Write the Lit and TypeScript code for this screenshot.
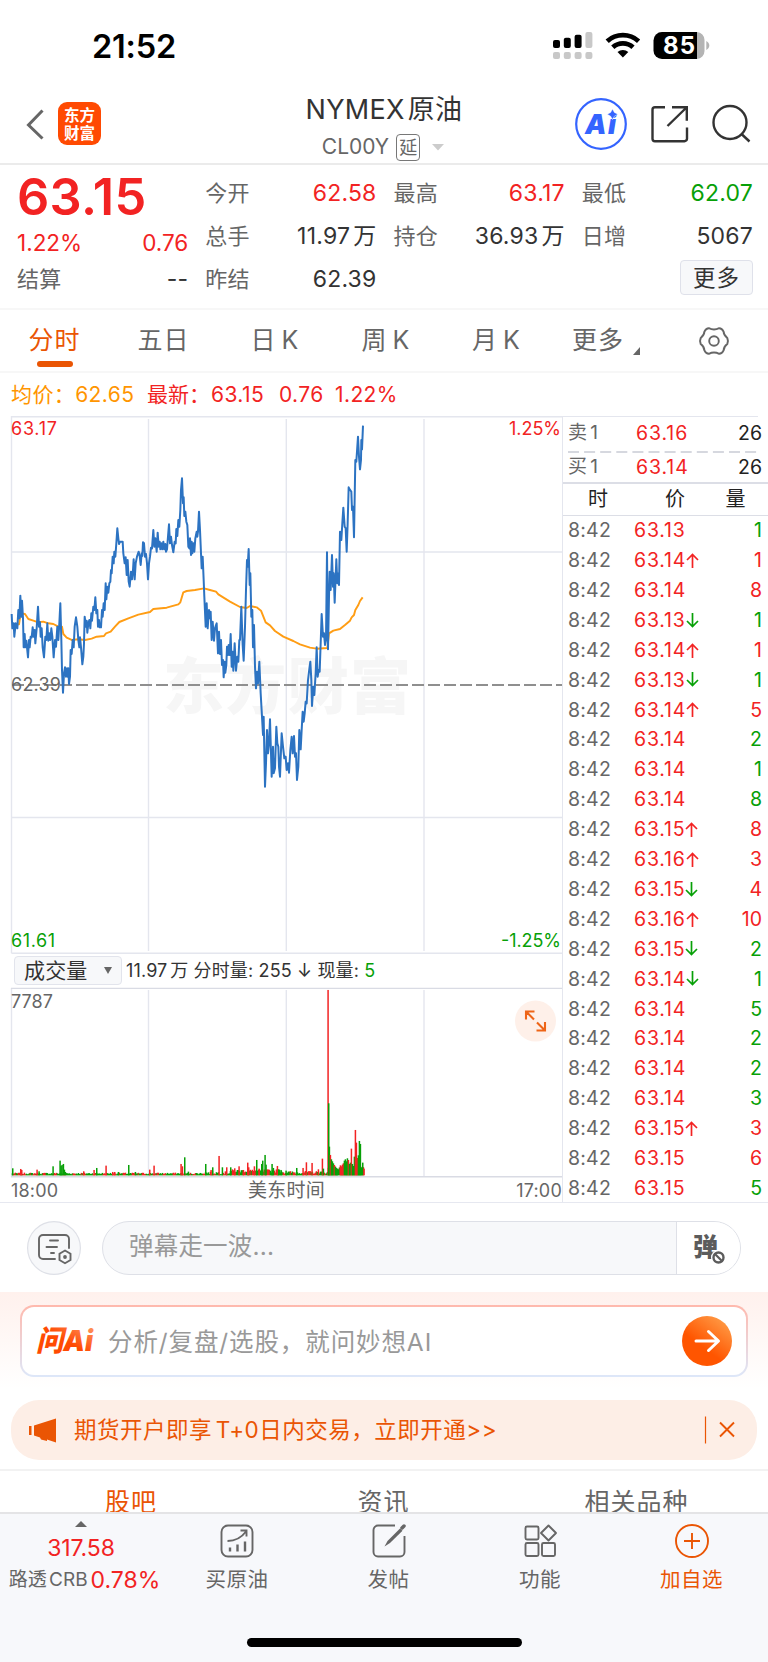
import { LitElement, html, svg, css } from "lit";
import { customElement } from "lit/decorators.js";

const RED = "#f22323";
const GREEN = "#07a007";

// Chart samples: x, y pairs in third-pixel units, y measured from 6px above the plot.
const PRICE = [
  35,612,37,655,41,640,43,680,47,640,52,655,55,600,58,625,61,557,64,620,66,572,69,625,71,712,74,672,76,712,79,692,
  81,712,84,742,87,690,89,712,92,680,95,682,98,652,101,680,104,660,106,700,110,655,114,590,117,650,120,637,122,680,
  125,655,128,712,132,742,136,680,139,690,142,640,145,692,148,670,151,690,154,655,157,680,161,742,165,690,168,710,
  172,650,175,690,178,640,181,580,184,690,186,780,189,848,192,790,195,772,198,800,201,775,203,800,205,775,207,822,
  210,800,212,720,215,732,218,690,221,712,224,650,228,622,232,650,235,690,238,712,240,682,243,712,247,763,250,740,
  252,700,254,620,258,650,260,632,262,668,265,640,268,630,271,655,274,610,276,632,280,590,283,600,286,562,289,610,
  292,600,294,650,297,630,299,652,303,652,306,600,308,620,311,580,314,600,317,520,319,568,322,530,325,548,328,520,
  331,515,333,480,335,490,338,440,341,460,343,425,346,440,349,400,352,355,355,385,357,402,360,395,368,395,370,430,
  374,460,377,442,380,495,383,450,386,515,389,530,393,485,396,508,399,480,401,448,404,508,407,460,411,440,416,425,
  419,437,422,465,425,430,427,438,429,397,432,400,435,440,438,432,441,460,444,508,447,460,450,440,453,413,456,415,
  460,360,463,410,466,385,470,425,473,368,476,410,479,395,481,418,484,400,487,418,490,395,493,418,496,402,498,425,
  501,418,504,380,507,343,510,400,513,380,516,405,520,427,524,395,527,400,529,357,532,378,535,330,538,350,541,300,
  543,240,546,205,549,280,551,262,553,318,556,305,559,335,562,345,565,410,568,415,570,385,573,435,575,395,577,430,
  580,400,583,425,586,385,590,365,592,380,594,365,597,305,600,360,603,430,605,475,608,440,611,510,613,560,617,650,
  620,580,623,655,627,600,630,625,632,605,635,690,638,635,642,692,645,655,648,645,650,640,654,730,657,665,660,732,
  663,690,666,765,669,750,671,802,674,755,676,788,679,765,681,710,684,735,686,705,689,735,692,672,695,770,698,725,
  700,782,704,700,708,782,712,740,715,755,718,690,720,690,724,590,728,705,731,752,735,650,738,540,741,450,743,470,
  746,417,749,525,751,490,754,620,757,600,759,712,762,645,765,770,768,835,771,785,774,820,778,755,782,850,786,920,
  789,975,791,920,795,1130,798,1060,801,960,804,1030,807,1000,810,928,813,1030,815,1100,819,1010,821,1090,825,1075,
  829,950,832,1000,835,1010,837,1070,840,1100,845,970,849,1010,853,1045,857,1040,860,1080,864,1060,867,1088,
  871,1020,875,980,878,1030,882,978,885,1040,888,1030,891,1110,895,1070,898,960,902,1018,905,960,908,905,911,935,
  914,910,917,875,920,880,924,810,927,785,931,755,934,810,936,888,940,830,943,855,947,790,950,712,953,800,956,780,
  959,785,962,700,965,612,969,680,972,670,975,705,978,690,981,427,984,718,987,560,989,485,992,540,996,435,999,530,
  1001,490,1004,578,1007,500,1009,448,1012,520,1015,490,1017,525,1020,365,1024,390,1027,340,1030,293,1034,350,
  1037,355,1040,425,1043,340,1046,232,1050,240,1054,245,1056,300,1059,290,1062,382,1066,150,1069,155,1074,80,
  1077,140,1080,178,1083,150,1084,90,1086,118,1089,47,
];
const AVERAGE = [
  40,645,57,643,62,610,75,612,85,627,100,632,115,637,130,635,145,640,160,642,175,650,186,650,190,672,200,683,
  215,690,235,688,255,690,275,686,290,680,312,678,318,670,332,665,345,650,358,636,385,625,415,614,450,606,460,597,
  500,593,535,583,541,577,550,547,560,543,585,540,612,535,630,540,648,545,655,553,690,575,720,591,740,594,750,588,
  770,592,783,602,797,637,810,646,825,663,850,680,880,693,900,703,930,713,950,716,982,714,987,670,1000,662,
  1020,657,1035,645,1050,632,1055,622,1062,615,1066,600,1075,585,1080,573,1088,562,
];

type Bar = [number, number, "r" | "g"];
const PEAKS: Bar[] = [
  [38,21,"g"],[62,19,"r"],[65,16,"r"],[111,17,"r"],[117,12,"g"],[159,27,"g"],[180,44,"g"],[183,28,"g"],[186,31,"g"],
  [190,34,"g"],[193,17,"g"],[196,10,"g"],[251,12,"r"],[282,16,"r"],[290,22,"g"],[318,29,"r"],[338,10,"r"],[344,10,"r"],
  [355,10,"g"],[386,31,"g"],[406,10,"g"],[449,17,"r"],[462,29,"r"],[543,34,"r"],[547,27,"r"],[554,54,"g"],[565,11,"g"],
  [617,34,"g"],[633,16,"r"],[638,24,"g"],[657,58,"r"],[667,24,"g"],[680,24,"r"],[692,24,"g"],[704,21,"r"],[717,27,"r"],
  [730,16,"r"],[743,38,"r"],[746,24,"r"],[763,27,"r"],[770,46,"g"],[777,20,"r"],[785,34,"g"],[788,44,"g"],[795,61,"g"],
  [798,32,"g"],[816,34,"g"],[820,22,"g"],[832,28,"r"],[836,18,"g"],[843,16,"g"],[858,14,"g"],[890,22,"g"],[909,22,"r"],
  [919,39,"r"],[936,37,"r"],[955,18,"r"],[967,50,"r"],[970,20,"g"],[984,556,"r"],[986,216,"g"],[988,86,"g"],[991,61,"r"],
  [994,48,"g"],[997,42,"g"],[1000,36,"g"],[1003,31,"r"],[1006,26,"g"],[1009,22,"g"],[1012,20,"g"],[1021,30,"r"],
  [1024,27,"r"],[1027,32,"r"],[1030,36,"r"],[1033,44,"g"],[1036,48,"g"],[1039,42,"g"],[1042,51,"g"],[1045,46,"r"],
  [1048,34,"g"],[1051,38,"g"],[1054,80,"r"],[1057,34,"g"],[1060,28,"g"],[1063,56,"g"],[1066,136,"r"],[1069,98,"r"],
  [1072,52,"r"],[1075,60,"g"],[1078,103,"g"],[1081,94,"g"],[1084,24,"g"],[1088,38,"g"],[1092,20,"r"],
];

function floorBars(): Bar[] {
  const out: Bar[] = [];
  let seed = 7;
  for (let x = 37; x < 1092; x += 3) {
    seed = (seed * 1103515245 + 12345) % 2147483648;
    const r = seed / 2147483648;
    let base = 3;
    let span = 5;
    if (x > 605 && x < 690) span = 9;
    if (x >= 690 && x < 850) { base = 8; span = 10; }
    if (x >= 850 && x < 984) { base = 4; span = 9; }
    if (x >= 984) { base = 14; span = 12; }
    out.push([x, base + r * span, (x * 7) % 10 < 3 || r > 0.85 ? "r" : "g"]);
  }
  return out;
}
const VOLUME: Bar[] = [...floorBars(), ...PEAKS];

const toPath = (p: number[]) => {
  let d = "";
  for (let i = 0; i < p.length; i += 2) d += `${i ? "L" : "M"}${p[i]} ${p[i + 1]}`;
  return d;
};

type Tick = [string, "" | "↑" | "↓", string, "r" | "g"];
const TICKS: Tick[] = [
  ["63.13","","1","g"],["63.14","↑","1","r"],["63.14","","8","r"],["63.13","↓","1","g"],["63.14","↑","1","r"],
  ["63.13","↓","1","g"],["63.14","↑","5","r"],["63.14","","2","g"],["63.14","","1","g"],["63.14","","8","g"],
  ["63.15","↑","8","r"],["63.16","↑","3","r"],["63.15","↓","4","r"],["63.16","↑","10","r"],["63.15","↓","2","g"],
  ["63.14","↓","1","g"],["63.14","","5","g"],["63.14","","2","g"],["63.14","","2","g"],["63.14","","3","g"],
  ["63.15","↑","3","r"],["63.15","","6","r"],["63.15","","5","g"],
];

const base = css`
  :host { display: block; box-sizing: border-box; }
  * { box-sizing: border-box; }
  svg { display: block; flex: none; overflow: visible; }
  .r { color: #f22323; }
  .g { color: #07a007; }
`;

@customElement("status-bar")
class StatusBar extends LitElement {
  static styles = [base, css`
    :host { height: 92px; }
    .bar { display: flex; height: 92px; padding-left: 92px; padding-right: 58px; justify-content: space-between; align-items: center; }
    .time { font-size: 32.5px; font-weight: 600; color: #000; letter-spacing: -0.2px; padding-top: 2px; }
    .lv { font: 700 24px Inter, sans-serif; fill: #fff; }
  `];
  render() {
    return html`<div class="bar">
      <span class="time">21:52</span>
      <svg width="158" height="30" viewBox="552 31 158 30">
        <rect x="553" y="40" width="7" height="8" rx="2"/>
        <rect x="563.8" y="37.7" width="7" height="10.3" rx="2"/>
        <rect x="574.6" y="34.7" width="7" height="13.3" rx="2"/>
        <g fill="#c8c8c8">
          <rect x="585.4" y="32" width="7" height="16" rx="2"/>
          <rect x="553" y="52" width="7" height="7" rx="2"/><rect x="563.8" y="52" width="7" height="7" rx="2"/>
          <rect x="574.6" y="52" width="7" height="7" rx="2"/><rect x="585.4" y="52" width="7" height="7" rx="2"/>
        </g>
        <g fill="none" stroke="#000" stroke-width="4.8">
          <path d="M607.2 41.2a23.5 23.5 0 0 1 31.4 0"/><path d="M612.8 47.2a15 15 0 0 1 20.2 0"/>
        </g>
        <path d="M622.9 57.5l-5.4-5.5a8 8 0 0 1 10.8 0z"/>
        <path d="M662 32h35v27h-35a8.5 8.5 0 0 1-8.5-8.5v-10A8.5 8.5 0 0 1 662 32z"/>
        <path d="M697 32a8 8 0 0 1 7.5 8v11a8 8 0 0 1-7.5 8z" fill="#b4b4b4"/>
        <path d="M706.3 41c4 2 4 7 0 9z" fill="#b4b4b4"/>
        <text class="lv" x="663" y="54.3" textLength="32">85</text>
      </svg>
    </div>`;
  }
}

@customElement("stock-header")
class StockHeader extends LitElement {
  static styles = [base, css`
    .head { display: grid; grid-template-columns: 250px 1fr 250px; height: 73px; border-bottom: 2px solid #ebebeb; }
    .left { display: flex; padding: 10px 0 0 26px; gap: 14px; align-items: flex-start; }
    .back { margin-top: 7px; }
    .logo { width: 43px; height: 43px; border-radius: 9px; background: #ff4a02; color: #fff; display: flex; flex-direction: column; align-items: center; justify-content: center; font: 700 15.5px/18px "Noto Sans CJK SC", sans-serif; padding-bottom: 1px; }
    .mid { display: flex; flex-direction: column; align-items: center; }
    .name { font-size: 27px; line-height: 36px; color: #333; letter-spacing: 0.3px; white-space: nowrap; }
    .name b { font-weight: 400; margin-left: 3px; }
    .sub { display: flex; align-items: center; color: #666; font-size: 21px; height: 28px; margin-top: 5px; padding-right: 2px; }
    .tag { width: 24px; height: 27px; border: 1.5px solid #777; border-radius: 4px; font-size: 18px; line-height: 25px; text-align: center; margin: 0 12px 0 7px; display: flex; justify-content: center; }
    .right { display: flex; justify-content: flex-end; padding: 5px 17px 0 0; }
    .ai { font: italic 900 27px Inter, sans-serif; fill: #3464ff; }
  `];
  render() {
    return html`<div class="head">
      <div class="left">
        <svg class="back" width="18" height="32" viewBox="26 109 18 32"><path d="M42.5 110.5L28.5 125l14 13.5" fill="none" stroke="#666" stroke-width="3"/></svg>
        <div class="logo"><span>东方</span><span>财富</span></div>
      </div>
      <div class="mid">
        <div class="name">NYMEX<b>原油</b></div>
        <div class="sub"><span>CL00Y</span><span class="tag">延</span>
          <svg width="12" height="7" viewBox="0 0 12 7"><path d="M0 0h12L6 6.5z" fill="#ccc"/></svg></div>
      </div>
      <div class="right">
        <svg width="176" height="54" viewBox="575 97 176 54">
          <circle cx="601" cy="124" r="24.8" fill="#fff" stroke="#3464ff" stroke-width="2.2"/>
          <text class="ai" x="585" y="134" textLength="31">Ai</text>
          <path d="M612.5 109l1.9 3.4 3.3 1.9-3.3 1.9-1.9 3.4-1.9-3.4-3.3-1.9 3.3-1.9z" fill="#3464ff" stroke="#fff" stroke-width="0.5"/>
          <g fill="none" stroke="#333" stroke-width="2.4">
            <path d="M665 107.2h-10a2.5 2.5 0 0 0-2.5 2.5v29a2.5 2.5 0 0 0 2.5 2.5h29.5a2.5 2.5 0 0 0 2.5-2.5V127.5"/>
            <path d="M667.5 126l19-18.5M672 107.2h14.8v13.5"/>
            <circle cx="730" cy="122.5" r="16.5"/><path d="M741.5 134l8 7.5"/>
          </g>
        </svg>
      </div>
    </div>`;
  }
}

@customElement("quote-panel")
class QuotePanel extends LitElement {
  static styles = [base, css`
    .panel { height: 145px; display: grid; grid-template-columns: repeat(4, 1fr); column-gap: 17px; padding: 7px 15px 0 17px; border-bottom: 2px solid #f7f7f7; font-size: 23px; color: #333; }
    .col { display: flex; flex-direction: column; }
    .row { display: flex; justify-content: space-between; height: 43px; line-height: 43px; white-space: nowrap; letter-spacing: 0.2px; word-spacing: -3.5px; }
    .k { color: #666; font-size: 22px; letter-spacing: 0.3px; }
    .big { height: 49px; line-height: 49px; font-size: 50.5px; font-weight: 600; letter-spacing: 0.3px; }
    .chg { height: 43px; font-size: 22.5px; letter-spacing: 0; }
    .last { height: 31px; line-height: 31px; }
    .more { width: 73px; height: 35px; border: 1px solid #dfe1ea; border-radius: 4px; background: #f7f8fa; margin-left: auto; font-size: 22.5px; line-height: 33px; text-align: center; letter-spacing: 1px; margin-top: 2px; }
  `];
  row(k: string, v: string, c = "") {
    return html`<div class="row"><span class="k">${k}</span><span class=${c}>${v}</span></div>`;
  }
  render() {
    return html`<div class="panel">
      <div class="col">
        <div class="big r">63.15</div>
        <div class="row chg r"><span>1.22%</span><span>0.76</span></div>
        <div class="row last"><span class="k">结算</span><span>--</span></div>
      </div>
      <div class="col">${this.row("今开", "62.58", "r")}${this.row("总手", "11.97 万")}${this.row("昨结", "62.39")}</div>
      <div class="col">${this.row("最高", "63.17", "r")}${this.row("持仓", "36.93 万")}</div>
      <div class="col">${this.row("最低", "62.07", "g")}${this.row("日增", "5067")}<div class="more">更多</div></div>
    </div>`;
  }
}

@customElement("period-tabs")
class PeriodTabs extends LitElement {
  static styles = [base, css`
    .tabs { display: grid; grid-template-columns: 109px 109px 114px 108px 113px 106px 1fr; height: 63px; border-bottom: 2px solid #f7f7f7; color: #666; font-size: 25px; letter-spacing: 1px; word-spacing: -3px; }
    .tab { display: flex; align-items: center; justify-content: center; white-space: nowrap; height: 61px; padding-top: 1px; }
    .on { color: #ea5504; position: relative; }
    .on::after { content: ""; position: absolute; left: 37px; top: 51px; width: 36px; height: 6px; border-radius: 3px; background: #ea5504; }
    .tri { margin: 19px 0 0 9px; }
    .info { height: 43px; display: flex; align-items: center; padding: 1px 0 0 11px; font-size: 21px; white-space: nowrap; letter-spacing: 0.4px; }
    .avg { color: #ff9500; width: 136px; letter-spacing: 0.4px; }
    .lab { width: 64px; letter-spacing: 0; }
    .n1 { width: 68px; } .n2 { width: 56px; }
  `];
  render() {
    return html`<div class="tabs">
        <div class="tab on">分时</div><div class="tab">五日</div><div class="tab">日 K</div><div class="tab">周 K</div><div class="tab">月 K</div>
        <div class="tab">更多<svg class="tri" width="7" height="8" viewBox="0 0 7 8"><path d="M7 0v8H0z" fill="#666"/></svg></div>
        <div class="tab"><svg width="30" height="28" viewBox="0 0 30 28" fill="none" stroke="#666" stroke-width="1.9" stroke-linejoin="round">
          <circle cx="15" cy="14" r="4.8"/>
          <path d="M9.8 1.2Q15 3.8 20.2 1.2Q23 1.2 24.6 4.6Q24.6 8.2 28.3 11Q29.6 14 28.3 17Q24.6 19.8 24.6 23.4Q23 26.8 20.2 26.8Q15 24.2 9.8 26.8Q7 26.8 5.4 23.4Q5.4 19.8 1.7 17Q.4 14 1.7 11Q5.4 8.2 5.4 4.6Q7 1.2 9.8 1.2Z"/></svg></div>
      </div>
      <div class="info"><span class="avg">均价：62.65</span><span class="r lab">最新：</span><span class="r n1">63.15</span><span class="r n2">0.76</span><span class="r">1.22%</span></div>`;
  }
}

@customElement("minute-chart")
class MinuteChart extends LitElement {
  static styles = [base, css`
    :host { width: 562px; }
    text { font: 18px Inter, "Noto Sans CJK SC", sans-serif; }
    .wm { font: 900 61px "Noto Sans CJK SC", sans-serif; fill: #f6f6f6; }
    .vol { display: flex; align-items: center; height: 35px; padding-left: 14px; font-size: 18px; color: #333; white-space: nowrap; letter-spacing: 0.15px; }
    .txt { padding-top: 2px; }
    .wan { word-spacing: -2.5px; }
    .sel { display: flex; align-items: center; justify-content: space-between; width: 108px; height: 29px; border: 1.5px solid #e2e4ec; border-radius: 4px; background: #f7f8fa; padding: 0 9px; font-size: 21px; margin-right: 4px; line-height: 26px; }
    .plot { position: relative; }
    .zoom { position: absolute; left: 515px; top: 12px; }
    .axis { display: grid; grid-template-columns: 1fr auto 1fr; height: 26px; align-items: center; padding: 3px 0 0 11px; font-size: 18px; letter-spacing: 0.2px; color: #666; }
    .mid { font-size: 19px; letter-spacing: 0.2px; }
    .end { text-align: right; }
  `];
  render() {
    const vlines = (y1: number, y2: number) => [148.5, 286.3, 424].map((x) => svg`<path d="M${x} ${y1}V${y2}"/>`);
    return html`
      <svg width="562" height="537" viewBox="0 416 562 537">
        <text class="wm" x="163" y="709" textLength="248">东方财富</text>
        <g fill="none" stroke="#e4e6ee" stroke-width="1.4">
          <path d="M11.5 953.3V416.7H562M11.5 953.3H562M12 552h550M12 817.5h550"/>${vlines(419, 951)}
        </g>
        <path d="M12 685H562" stroke="#8f8f8f" stroke-width="1.8" stroke-dasharray="12 4"/>
        <g fill="none" transform="translate(0 410) scale(0.33333)" stroke-linejoin="round">
          <path d=${toPath(AVERAGE)} stroke="#ff9d14" stroke-width="5.8"/>
          <path d=${toPath(PRICE)} stroke="#2c73c2" stroke-width="6"/>
        </g>
        <text x="11" y="434.5" fill=${RED} textLength="46">63.17</text>
        <text x="561" y="434.5" fill=${RED} text-anchor="end" textLength="52">1.25%</text>
        <text x="11" y="690.5" fill="#666" textLength="50">62.39</text>
        <text x="11" y="946.5" fill=${GREEN} textLength="44">61.61</text>
        <text x="561" y="946.5" fill=${GREEN} text-anchor="end" textLength="60">-1.25%</text>
      </svg>
      <div class="vol"><div class="sel">成交量<svg width="8" height="7" viewBox="0 0 8 7"><path d="M0 0h8L4 7z" fill="#666"/></svg></div>
        <span class="txt"><span class="wan">11.97 万</span> 分时量: 255 ↓ 现量: <span class="g">5</span></span></div>
      <div class="plot">
        <svg width="562" height="188" viewBox="0 988 562 188">
          <g fill="none" stroke="#e4e6ee" stroke-width="1.4"><path d="M11.5 988v189"/>${vlines(990, 1176)}</g>
          <path d="M11 988.4H562M11 1176.7H562" stroke="#d9dbe4" stroke-width="1.4"/>
          <g transform="translate(0 1175.3) scale(0.33333 -0.33333)">
            ${VOLUME.map(([x, h, c]) => svg`<rect x=${x - 2} y="0" width="4.5" height=${h} fill=${c === "r" ? RED : GREEN}/>`)}
          </g>
          <text x="11" y="1008" fill="#666" textLength="42">7787</text>
        </svg>
        <svg class="zoom" width="42" height="42" viewBox="0 0 42 42"><circle cx="20.5" cy="21" r="20.5" fill="#fef0e9"/>
          <g fill="none" stroke="#ee6416" stroke-width="2.1"><path d="M19.5 11.5h-8.5v8M11 11.5l8 8M30 22v8.5h-8.5M30 30.5l-8-8"/></g></svg>
      </div>
      <div class="axis"><span>18:00</span><span class="mid">美东时间</span><span class="end">17:00</span></div>`;
  }
}

@customElement("tick-list")
class TickList extends LitElement {
  static styles = [base, css`
    :host { width: 206px; border-left: 1.5px solid #e4e6ee; }
    .q { display: grid; grid-template-columns: 68px 1fr auto; align-items: center; padding: 0 6px 0 5px; font-size: 19.5px; color: #222; white-space: nowrap; letter-spacing: 0.9px; }
    .ask { height: 35px; padding-bottom: 2px; border-top: 1.5px solid; border-image: linear-gradient(90deg, #e4e6ee 194px, transparent 194px) 1; }
    .k { color: #666; font-size: 19px; letter-spacing: 0; word-spacing: -2px; }
    .n { letter-spacing: 0; }
    .bid { height: 31px; padding-bottom: 1px; border-bottom: 2px solid #dcdee6; }
    .dash { display: block; }
    .hd { height: 31.5px; display: grid; grid-template-columns: 70px 84px 1fr; align-items: center; padding-top: 1px; color: #222; font-size: 20px; border-bottom: 1.5px solid #dcdee6; text-align: center; }
    .hd span:nth-child(3) { padding-right: 14px; }
    .t { display: grid; grid-template-columns: 66px 1fr auto; height: 29.9px; align-items: center; padding: 0 6px 0 5px; font-size: 19.5px; white-space: nowrap; }
    .tm { color: #666; letter-spacing: 0.2px; }
    .px { display: flex; align-items: center; letter-spacing: 0.8px; }
  `];
  arrow(a: string) {
    return html`<svg width="13" height="15" viewBox="0 0 13 15" fill="none" stroke=${a === "↑" ? RED : GREEN} stroke-width="1.7">
      <path d=${a === "↑" ? "M6.5 15V1.5M1 7l5.5-5.5L12 7" : "M6.5 0v13.5M1 8l5.5 5.5L12 8"}/></svg>`;
  }
  render() {
    return html`
      <div class="q ask"><span class="k">卖 1</span><span class="r">63.16</span><span class="n">26</span></div>
      <svg class="dash" width="206" height="2" viewBox="0 0 206 2"><path d="M5 1H195" stroke="#d6d8df" stroke-width="2" stroke-dasharray="11 5.1"/></svg>
      <div class="q bid"><span class="k">买 1</span><span class="r">63.14</span><span class="n">26</span></div>
      <div class="hd"><span>时</span><span>价</span><span>量</span></div>
      ${TICKS.map(([p, a, v, c]) => html`<div class="t"><span class="tm">8:42</span><span class="px r">${p}${a ? this.arrow(a) : ""}</span><span class=${c}>${v}</span></div>`)}`;
  }
}

@customElement("promo-area")
class PromoArea extends LitElement {
  static styles = [base, css`
    .dm { display: flex; gap: 21px; padding: 18px 27px 17px; height: 89px; }
    .pill { flex: 1; height: 54px; border: 1.5px solid #dee0e7; border-radius: 27px; display: flex; overflow: hidden; background: #f7f8fa; }
    .ph { flex: 1; color: #999; font-size: 24.5px; line-height: 48px; padding-left: 26px; letter-spacing: 0.2px; }
    .tan { width: 64px; background: #fff; border-left: 1.5px solid #dee0e7; padding: 12px 0 0 15px; }
    .tan text { font: 900 25px "Noto Sans CJK SC", sans-serif; fill: #5c5c5c; }
    .ai { background: linear-gradient(#fff1ed, #fff); height: 97px; padding: 13px 20px 0; }
    .box { height: 72px; border: 2px solid transparent; border-radius: 14px; background: linear-gradient(#fff, #fff) padding-box, linear-gradient(#ffb9ad, #dde7f9) border-box; display: flex; align-items: center; padding: 0 14px; }
    .brand { font: italic 900 29px Inter, "Noto Sans CJK SC", sans-serif; fill: url(#brand); }
    .q { flex: 1; color: #999; font-size: 24.5px; letter-spacing: 0.9px; padding: 2px 0 0 14px; white-space: nowrap; }
    .notice { margin: 11px 11px 9px; height: 60px; border-radius: 28px; background: #fdeee6; display: flex; align-items: center; padding: 0 22px 0 17px; color: #ea5504; font-size: 22.5px; letter-spacing: 0.5px; word-spacing: -3px; }
    .txt { flex: 1; padding-left: 18px; white-space: nowrap; }
    .sub { border-top: 2px solid #f2f2f2; height: 43px; overflow: hidden; display: grid; grid-template-columns: 262px 1fr 263px; color: #666; font-size: 25px; letter-spacing: 1px; text-align: center; line-height: 63px; }
    .sel { color: #ea5504; }
  `];
  render() {
    return html`
      <div class="dm">
        <svg width="54" height="54" viewBox="27 1221 54 54"><circle cx="54" cy="1248" r="26.4" fill="#f7f8fa" stroke="#dee0e7" stroke-width="1.2"/>
          <g fill="none" stroke="#666" stroke-width="1.9" stroke-linecap="round">
            <path d="M69 1248v-9a4 4 0 0 0-4-4H43a4 4 0 0 0-4 4v16a4 4 0 0 0 4 4h12"/>
            <path d="M50 1240.5h8M46.5 1247h10.5M51 1253h3"/>
            <path d="M65 1250.5l5.5 3.2v6.3l-5.5 3.2-5.5-3.2v-6.3z"/></g><circle cx="65" cy="1257" r="1.9" fill="#666"/></svg>
        <div class="pill"><div class="ph">弹幕走一波...</div>
          <div class="tan"><svg width="34" height="32" viewBox="0 0 34 32"><text x="1" y="22">弹</text>
            <circle cx="26.5" cy="23.5" r="7.5" fill="#fff"/><circle cx="26.5" cy="23.5" r="5" fill="#fff" stroke="#5c5c5c" stroke-width="2.4"/><path d="M23 20l7 7" stroke="#5c5c5c" stroke-width="2.2"/></svg></div>
        </div>
      </div>
      <div class="ai"><div class="box">
        <svg width="58" height="34" viewBox="0 0 58 34"><defs><linearGradient id="brand" x1="0" y1="1" x2="1" y2="0"><stop offset="0.5" stop-color="#ff4a02"/><stop offset="1" stop-color="#ffa070"/></linearGradient></defs>
          <text class="brand" x="0" y="27" textLength="57" lengthAdjust="spacingAndGlyphs">问Ai</text></svg>
        <span class="q">分析/复盘/选股，就问妙想AI</span>
        <svg width="50" height="50" viewBox="0 0 50 50"><defs><linearGradient id="go" x1="0.2" y1="0.9" x2="0.8" y2="0.1"><stop offset="0.35" stop-color="#ff5500"/><stop offset="1" stop-color="#ff9540"/></linearGradient></defs>
          <circle cx="25" cy="25" r="25" fill="url(#go)"/><path d="M14 25h22M26.5 15.5l10 9.5-10 9.5" fill="none" stroke="#fff" stroke-width="3" stroke-linecap="round" stroke-linejoin="round"/></svg>
      </div></div>
      <div class="notice">
        <svg width="28" height="25" viewBox="0 0 28 25" fill="#ea5504"><path d="M1 8h2.5v9H1zM6 7.5L28 .5v24l-9-3v1.5l-6-1.5-1-2-6-2z"/></svg>
        <span class="txt">期货开户即享 T+0日内交易，立即开通&gt;&gt;</span>
        <svg width="32" height="28" viewBox="0 0 32 28" fill="none" stroke="#ea5504"><path d="M2.5 0.5v27" stroke-width="1.2"/><path d="M17 6.5l14 14M31 6.5l-14 14" stroke-width="1.9"/></svg>
      </div>
      <div class="sub"><span class="sel">股吧</span><span>资讯</span><span>相关品种</span></div>`;
  }
}

@customElement("bottom-bar")
class BottomBar extends LitElement {
  static styles = [base, css`
    :host { height: 150px; background: #f7f8fb; border-top: 2px solid #e4e4e6; }
    .nav { display: grid; grid-template-columns: 162px 150px 153px 150px 153px; height: 124px; }
    .it { display: flex; flex-direction: column; align-items: center; color: #666; font-size: 20.5px; white-space: nowrap; }
    .it svg { margin-top: 10px; }
    .lab { margin-top: 8px; line-height: 28px; letter-spacing: 0.5px; }
    .on { color: #ea5504; }
    .idx .up { margin-top: 7px; }
    .v { font-size: 23px; line-height: 28px; margin-top: 7px; letter-spacing: -0.1px; }
    .w { display: flex; align-items: center; height: 30px; margin-top: 3px; font-size: 19px; margin-left: 7px; word-spacing: -3px; }
    .w .r { font-size: 23px; margin-left: 3px; }
    .home { width: 275px; height: 9px; border-radius: 5px; background: #000; margin: 0 auto; }
  `];
  item(icon: unknown, label: string, on = "") {
    return html`<div class="it ${on}"><svg width="34" height="34" viewBox="0 0 34 34" fill="none" stroke="currentColor" stroke-width="1.9">${icon}</svg><span class="lab">${label}</span></div>`;
  }
  render() {
    return html`<div class="nav">
      <div class="it idx"><svg class="up" width="12" height="6" viewBox="0 0 12 6"><path d="M6 0l6 6H0z" fill="#666"/></svg>
        <span class="v r">317.58</span><div class="w"><span>路透 CRB</span><span class="r">0.78%</span></div></div>
      ${this.item(svg`<rect x="1.5" y="1.5" width="31" height="31" rx="6.5"/><path d="M7.5 17Q19 17 26 7.5M20.5 6.5h6v6"/><path d="M10 23.5v4M17.5 20.5v7M25 17.5v10" stroke-width="2.4"/>`, "买原油")}
      ${this.item(svg`<path d="M23 1.5H6a4.5 4.5 0 0 0-4.5 4.5v22A4.5 4.5 0 0 0 6 32.5h22a4.5 4.5 0 0 0 4.5-4.5V12"/><path d="M12.5 22.5l3-5.5L28 4.5l2.5 2.3L18 19z" fill="currentColor" stroke="none"/><path d="M30 4l2-2" stroke-width="3.5" stroke-linecap="round"/>`, "发帖")}
      ${this.item(svg`<rect x="2.5" y="2.5" width="13" height="13" rx="1.5"/><rect x="2.5" y="19" width="13" height="13" rx="1.5"/><rect x="19" y="19" width="13" height="13" rx="1.5"/><path d="M25.5 1.5l7.5 7.5-7.5 7.5-7.5-7.5z" stroke-linejoin="round"/>`, "功能")}
      ${this.item(svg`<circle cx="17" cy="17" r="16"/><path d="M17 9v16M9 17h16"/>`, "加自选", "on")}
    </div><div class="home"></div>`;
  }
}

@customElement("app-root")
class AppRoot extends LitElement {
  static styles = css`
    :host { display: block; width: 768px; height: 1662px; overflow: hidden; background: #fff; font-family: Inter, "Noto Sans CJK SC", sans-serif; line-height: 1.25; color: #333; }
    .main { box-sizing: border-box; display: flex; height: 787px; overflow: hidden; border-bottom: 1.5px solid #e6e8f0; }
  `;
  render() {
    return html`<status-bar></status-bar><stock-header></stock-header><quote-panel></quote-panel><period-tabs></period-tabs>
      <div class="main"><minute-chart></minute-chart><tick-list></tick-list></div>
      <promo-area></promo-area><bottom-bar></bottom-bar>`;
  }
}
